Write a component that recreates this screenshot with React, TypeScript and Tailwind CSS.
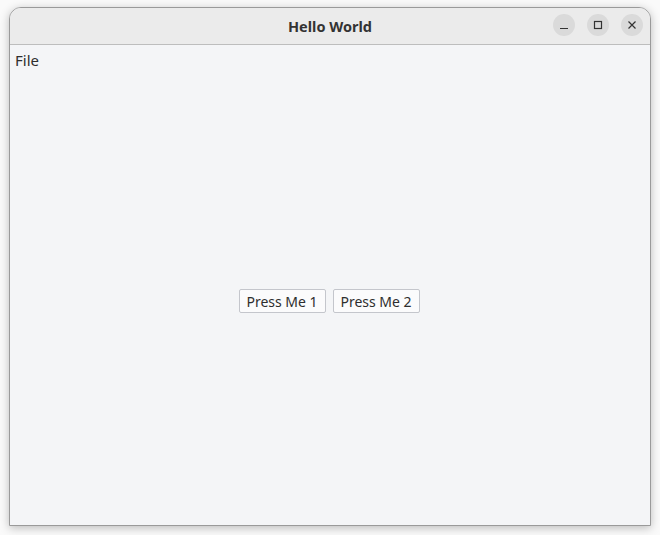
export default function App() {
  return (
    <div className="w-[660px] h-[535px] bg-[#fafafa] pt-[7px] pl-[9px] font-['Noto_Sans',sans-serif] text-[#2e2e2e]">
      <div className="w-[642px] h-[519px] flex flex-col rounded-t-[12px] border border-[#9a9a9a] overflow-hidden shadow-[0_2px_10px_rgba(0,0,0,0.25)] bg-[#f4f5f7]">
        <div className="h-[37px] shrink-0 relative flex items-center justify-center bg-[#ebebeb] border-b border-[#bdbdbd]">
          <span className="text-[14.5px] font-bold text-[#333] pt-[2px]">Hello World</span>
          <div className="absolute right-[7px] top-[6px] flex gap-[12px]">
            <div className="w-[22px] h-[22px] rounded-full bg-[#dadada] flex items-center justify-center">
              <svg width="10" height="10" viewBox="0 0 10 10"><path d="M1 8.5h8" stroke="#333" strokeWidth="1.2" /></svg>
            </div>
            <div className="w-[22px] h-[22px] rounded-full bg-[#dadada] flex items-center justify-center">
              <svg width="10" height="10" viewBox="0 0 10 10"><rect x="1.5" y="1.5" width="7" height="7" fill="none" stroke="#333" strokeWidth="1.2" /></svg>
            </div>
            <div className="w-[22px] h-[22px] rounded-full bg-[#dadada] flex items-center justify-center">
              <svg width="10" height="10" viewBox="0 0 10 10"><path d="M1.5 1.5l7 7M8.5 1.5l-7 7" stroke="#333" strokeWidth="1.2" /></svg>
            </div>
          </div>
        </div>
        <div className="h-[30px] shrink-0 px-[5px] pt-[5px] text-[15px] leading-[20px]">File</div>
        <div className="flex-1 flex items-center justify-center gap-[7px] pt-[2px] pr-[2px]">
          <button className="h-[24px] w-[87px] rounded-[2px] border border-[#c4c6cc] bg-[#fbfbfc] text-[14px] text-[#2e2e2e]">Press Me 1</button>
          <button className="h-[24px] w-[87px] rounded-[2px] border border-[#c4c6cc] bg-[#fbfbfc] text-[14px] text-[#2e2e2e]">Press Me 2</button>
        </div>
      </div>
    </div>
  );
}
